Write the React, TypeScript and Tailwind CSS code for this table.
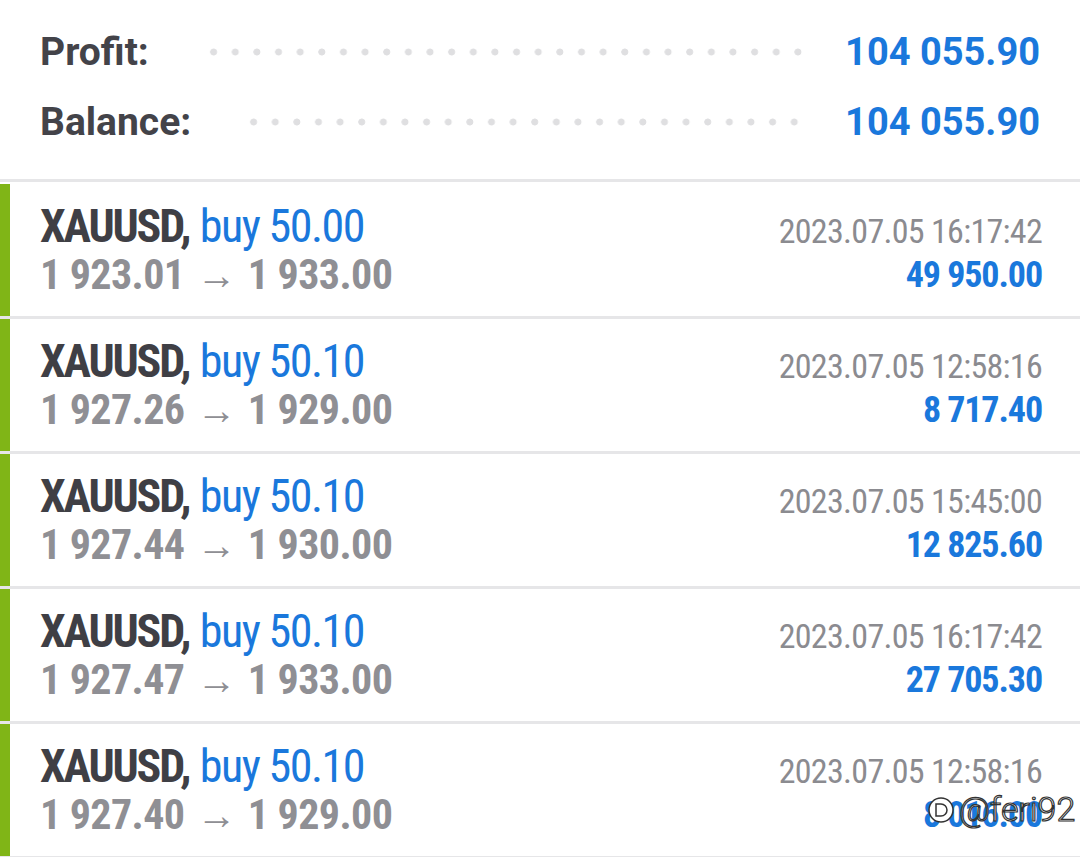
import React from "react";

// Trade history summary: account totals on top, closed deals below.

type Deal = {
  symbol: string;
  side: string;
  volume: string;
  open: string;
  close: string;
  time: string;
  profit: string;
};

const deals: Deal[] = [
  { symbol: "XAUUSD", side: "buy", volume: "50.00", open: "1 923.01", close: "1 933.00", time: "2023.07.05 16:17:42", profit: "49 950.00" },
  { symbol: "XAUUSD", side: "buy", volume: "50.10", open: "1 927.26", close: "1 929.00", time: "2023.07.05 12:58:16", profit: "8 717.40" },
  { symbol: "XAUUSD", side: "buy", volume: "50.10", open: "1 927.44", close: "1 930.00", time: "2023.07.05 15:45:00", profit: "12 825.60" },
  { symbol: "XAUUSD", side: "buy", volume: "50.10", open: "1 927.47", close: "1 933.00", time: "2023.07.05 16:17:42", profit: "27 705.30" },
  { symbol: "XAUUSD", side: "buy", volume: "50.10", open: "1 927.40", close: "1 929.00", time: "2023.07.05 12:58:16", profit: "8 016.00" },
];

function SummaryRow({ label, value, dotsClass }: { label: string; value: string; dotsClass: string }) {
  return (
    <div className="flex h-[70px] items-center">
      <span className="text-[39px] font-bold text-[#434349]">{label}</span>
      <div
        className={
          "h-[8px] flex-1 bg-[radial-gradient(circle,#dfdfe1_3.2px,transparent_3.8px)] bg-[length:21.3px_8px] bg-repeat-space " +
          dotsClass
        }
      />
      <span className="text-[38px] font-bold text-[#1a78dc]">{value}</span>
    </div>
  );
}

function DealRow({ d }: { d: Deal }) {
  return (
    <div className="flex h-[135px] border-b-[3px] border-[#e6e6e8]">
      <div className="w-[10px] bg-[#80b517]" />
      <div className="flex flex-1 justify-between pl-[30px] pr-[38px] pt-[18px] font-stretch-condensed">
        <div className="flex flex-col">
          <div className="h-[48px] text-[46px] leading-[48px]">
            <span className="font-bold tracking-[-2.2px] text-[#3f3f45]">{d.symbol},</span>{" "}
            <span className="tracking-[-1.5px] text-[#1a78dc]">
              {d.side} {d.volume}
            </span>
          </div>
          <div className="mt-[1px] flex h-[48px] items-baseline gap-[12px] text-[42px] font-bold leading-[48px] tracking-[-0.6px] text-[#8f8f94]">
            <span>{d.open}</span>
            <span className="text-[40px] font-normal leading-none font-stretch-normal">→</span>
            <span>{d.close}</span>
          </div>
        </div>
        <div className="flex flex-col items-end">
          <div className="mt-[9px] h-[40px] text-[34px] leading-[40px] tracking-[-0.7px] text-[#8b8b90]">
            {d.time}
          </div>
          <div className="h-[48px] text-[36px] font-bold leading-[48px] tracking-[-1.1px] text-[#1a78dc]">
            {d.profit}
          </div>
        </div>
      </div>
    </div>
  );
}

export default function App() {
  return (
    <div className="relative h-[857px] w-[1080px] overflow-hidden bg-white font-['Roboto',sans-serif]">
      <div className="h-[182px] border-b-[3px] border-[#e6e6e8] px-[40px] pt-[17px]">
        <SummaryRow label="Profit:" value="104 055.90" dotsClass="ml-[54px] mr-[36px]" />
        <SummaryRow label="Balance:" value="104 055.90" dotsClass="ml-[52px] mr-[40px]" />
      </div>
      <div className="pt-[2px]">
        {deals.map((d, i) => (
          <DealRow key={i} d={d} />
        ))}
      </div>
      {/* watermark */}
      <div className="absolute left-[926px] top-[784px] flex items-center gap-[3px] text-[34px] font-light text-white [-webkit-text-stroke:1.2px_#333]">
        <svg width="30" height="30" viewBox="0 0 30 30" fill="none">
          <circle cx="15" cy="15" r="12" stroke="#333" strokeWidth="1.5" fill="white" />
          <path d="M10 9h5a6 6 0 0 1 0 12h-5z" stroke="#333" strokeWidth="1.5" fill="white" />
        </svg>
        <span>@feri92</span>
      </div>
    </div>
  );
}
